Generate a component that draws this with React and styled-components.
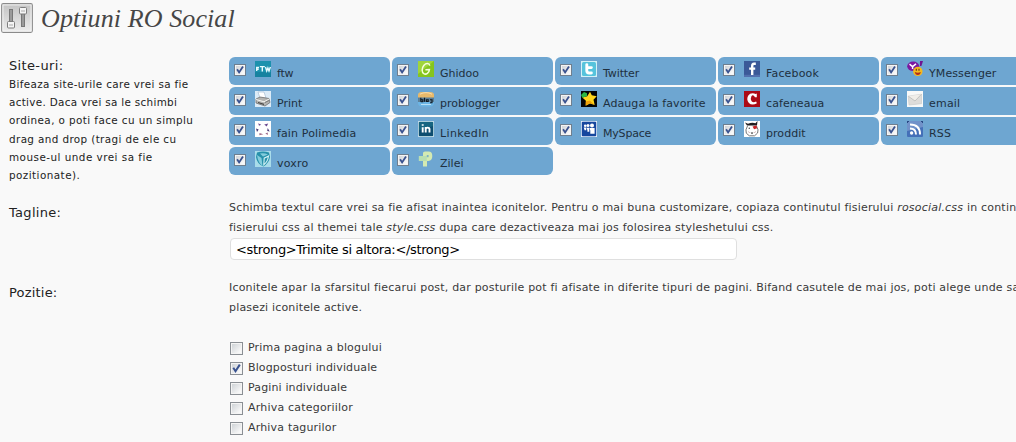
import React from "react";
import styled, { createGlobalStyle } from "styled-components";

const GlobalStyle = createGlobalStyle`
  * { box-sizing: border-box; }
  html, body { margin: 0; height: 442px; overflow: hidden; background: #f9f9f9; }
  body { font-family: Verdana, "DejaVu Sans", sans-serif; color: #3a3a3a; font-size: 11px; }
`;

const Page = styled.main`
  width: 1016px;
  height: 442px;
  overflow: hidden;
  background: #f9f9f9;
`;

const Header = styled.header`
  display: flex;
  height: 57px;
  padding: 3px 0 0 1px;
`;

const Title = styled.h1`
  margin: 1px 0 0 8px;
  font: italic 26px/30px Georgia, "Liberation Serif", serif;
  letter-spacing: 0.1px;
  color: #464646;
  white-space: nowrap;
`;

const FormRow = styled.section`
  display: flex;
  height: ${(p) => p.$height}px;
`;

const LabelCell = styled.div`
  width: 229px;
  flex: none;
  padding: ${(p) => p.$top}px 30px 0 9px;
`;

const Label = styled.h2`
  margin: 0;
  font-size: 13px;
  line-height: 18px;
  font-weight: normal;
  color: #222;
  letter-spacing: ${(p) => p.$spacing || 0}px;
`;

const Hint = styled.p`
  margin: 0;
  font-size: 10.4px;
  line-height: 18.2px;
  color: #222;
  white-space: nowrap;
`;

const HintLine = styled.span`
  display: block;
  letter-spacing: ${(p) => p.$spacing}px;
`;

const Content = styled.div`
  flex: none;
  width: 820px;
  padding-top: ${(p) => p.$top || 0}px;
`;

const SiteGrid = styled.ul`
  display: grid;
  grid-template-columns: repeat(5, 161px);
  grid-auto-rows: 28px;
  gap: 2px;
  margin: 0;
  padding: 0;
  list-style: none;
`;

const SiteCard = styled.li`
  display: flex;
  align-items: flex-start;
  padding: 4px 0 0 5px;
  border-radius: 6px;
  background: #6ea6d1;
`;

const SiteName = styled.span`
  margin: 5px 0 0 6px;
  line-height: 16px;
  color: #203040;
  white-space: nowrap;
  letter-spacing: ${(p) => p.$spacing}px;
`;

const Glyph = styled.svg`
  display: block;
  flex: none;
  width: 16px;
  height: 16px;
  margin-left: 9px;
`;

const Box = styled.span`
  display: block;
  flex: none;
  width: ${(p) => p.$size}px;
  height: ${(p) => p.$size}px;
  margin-top: ${(p) => p.$top}px;
  border: 1px solid ${(p) => p.$border};
  background: linear-gradient(135deg, #c9ced2, #f8f8f8 80%);
  box-shadow: inset 0 0 0 1px #f4f4f4;
  svg { display: block; width: 100%; height: 100%; }
`;

const Line = styled.p`
  margin: 0;
  line-height: 20px;
  height: 20px;
  white-space: nowrap;
  letter-spacing: ${(p) => p.$spacing || 0}px;
`;

const TextInput = styled.input`
  display: block;
  width: 507px;
  height: 22px;
  margin: 0 0 0 1px;
  padding: 0 5px 0 5px;
  border: 1px solid #dfdfdf;
  border-radius: 4px;
  background: #fff;
  color: #000;
  font: 13px Verdana, "DejaVu Sans", sans-serif;
  letter-spacing: ${(p) => p.$spacing}px;
`;

const OptionList = styled.div`
  margin-top: 20px;
`;

const Option = styled.label`
  display: flex;
  gap: 5px;
  height: 20px;
  padding-left: 1px;
  line-height: 20px;
  white-space: nowrap;
  letter-spacing: ${(p) => p.$spacing}px;
`;

function Checkbox({ checked, size = 12, top = 3, border = "#6f7f8f" }) {
  return (
    <Box $size={size} $top={top} $border={border} role="checkbox" aria-checked={!!checked}>
      {checked && (
        <svg viewBox="0 0 11 11">
          <path d="M2.3 4.8 4.5 8.2 8.8 1.6" fill="none" stroke="#39528f" strokeWidth="2" />
        </svg>
      )}
    </Box>
  );
}

const icons = {
  ftw: (
    <>
      <rect width="16" height="16" fill="#1c91ad" />
      <rect y="11" width="16" height="5" fill="#1682a0" />
      <g fill="none" stroke="#e8fbff" strokeWidth="1.4">
        <path d="M1.7 10V6.5H4M1 8.3h2.7M4.8 5.6h5M7.3 5.6V10.5M10.5 6l1.2 4 1.2-3 1.1 3 1.4-4" />
      </g>
    </>
  ),
  print: (
    <>
      <rect width="16" height="16" fill="#dcebf7" />
      <path d="M3 1h6l2 6H5z" fill="#fff" stroke="#a8bdd4" strokeWidth=".7" />
      <path d="M1 8l4-2 9 1.5 1 4-5 3.5L1 12z" fill="#b5b5b2" stroke="#666" strokeWidth=".7" />
      <path d="M1 8.5l8 2.3 5.5-3" fill="none" stroke="#f4f4f0" />
      <path d="M3 11l6 1.7V14L3 12z" fill="#444" />
      <path d="M10 11.5l4-2" stroke="#777" />
    </>
  ),
  fain: (
    <>
      <rect width="16" height="16" fill="#fff" />
      <path d="M3.2 2.2l3 1.6-2.2 1zM9.2 3.6l4-1-1.5 3z" fill="#6a4a90" />
      <path d="M1 7.5l2.7 1L2 11zM12.7 7l2 3.5-2.5-.6z" fill="#4a3a78" />
      <path d="M4.5 12l3.8 1.2-4 1zM10.3 12.4l2.4-.8.2 2.4z" fill="#a06a88" />
    </>
  ),
  voxro: (
    <>
      <rect width="16" height="16" fill="#a9dcea" />
      <path d="M2 1.5Q8-.5 14 1.5L15 6q-1 6-6.5 9.5Q2 13 1 6z" fill="#2791ab" />
      <path d="M2 4l4.5 3 1 8Q3 12 2 4zM5 2.5q4-1 8 1L8 5.5z" fill="#84ccdc" />
      <path d="M13.5 5L9.2 7.2l-.4 6.6q4-3 4.7-8.8z" fill="none" stroke="#d7f3f6" strokeWidth="1.1" />
    </>
  ),
  ghidoo: (
    <>
      <rect width="16" height="16" fill="#85c51e" />
      <path d="M0 0h16L0 13z" fill="#a0d53b" />
      <path d="M11.8 4.6C11.3 2 8 2 6 4.3 3.6 7 3.6 11.2 5.8 12.7c2.4 1.3 5.3-.8 5.6-4.1L7.4 8.8" fill="none" stroke="#f5ffdc" strokeWidth="1.5" />
    </>
  ),
  problogger: (
    <>
      <rect y="1" width="16" height="14.5" rx="4" fill="#6cb5e5" />
      <path d="M0 7V4q0-3 4-3h8q4 0 4 3v3z" fill="#e9b96a" />
      <path d="M2 3.2Q8 0 14 3.2" fill="none" stroke="#f8deb0" />
      <rect y="6.5" width="16" height="4.5" fill="#5b7f98" />
      <path d="M2.8 6.8v4M2.8 8.8h2v2h-2M6.5 6.8v4M8.4 8.8h1.8v1.7H8.4zM12 8.8h2v2.9h-2" fill="none" stroke="#101820" strokeWidth="1.1" />
      <path d="M3 13.5h10" stroke="#b8dff5" />
    </>
  ),
  linkedin: (
    <>
      <rect width="16" height="16" rx="1.2" fill="#e1f1f7" />
      <rect x=".7" y=".7" width="14.6" height="14.6" rx="1" fill="#176580" />
      <path d="M1 9q7-1 14-4v10H1z" fill="#0e4e70" />
      <path d="M4.7 6.2v5.3M4.7 3.2v1.6M7.7 11.5V6M7.7 8q0-1.4 1.9-1.4T11.5 8v3.5" fill="none" stroke="#fff" strokeWidth="1.9" />
    </>
  ),
  zilei: (
    <>
      <path d="M5 15.5V2q0-1.5 2-1.5h3.5q3.8 0 3.8 4.4T10.5 10H9v5.5z" fill="#d4eab2" />
      <path d="M.8 5h8v5h-8z" fill="#b9dfb2" />
      <rect x="8.8" y="4" width="1.8" height="2.2" fill="#7fb3c4" />
    </>
  ),
  twitter: (
    <>
      <rect width="16" height="16" fill="#d4f1f7" />
      <rect x="1" y="1" width="14" height="14" rx="1.5" fill="#56c3dc" />
      <path d="M5.8 3.6v6.2q0 2.2 2.3 2.2H10.4M5.8 6.6H10.4" fill="none" stroke="#fff" strokeWidth="2.9" strokeLinecap="round" />
    </>
  ),
  favorite: (
    <>
      <rect width="16" height="16" fill="#050505" />
      <path d="M9 .8l1.8 3.4 4.9 1-3.2 3.6 1.2 5.2-4.7-1.4-4.3 2.2.2-5L1.3 6.5l4.9-1.2z" fill="#ffd51d" />
      <path d="M4.8 10.5l4-1 4.2 4-4.3-1.4-4 2.5z" fill="#f2a10a" />
      <path d="M0 4l3-3 3 1.2v3L1.2 6.8z" fill="#2cb743" />
    </>
  ),
  myspace: (
    <>
      <rect width="16" height="16" fill="#e4edf8" />
      <rect x=".8" y=".8" width="14.4" height="14.4" rx="1" fill="#17479e" />
      <g fill="#fff">
        <circle cx="4.2" cy="4.8" r="1.3" />
        <circle cx="7" cy="4.6" r="1.5" />
        <circle cx="11" cy="4.4" r="2" />
        <path d="M2.7 6.6h2.5v2.6H3.6zM5.5 6.8h2.8v4H6.4V9zM8.6 7h5v5.8H9.3V9.6z" />
      </g>
    </>
  ),
  facebook: (
    <>
      <rect width="16" height="16" fill="#3b5998" />
      <path d="M0 13.8h16V16H0z" fill="#526fad" />
      <path d="M11.8 2.8H10q-1.8 0-1.8 2.3V14M5.2 7.6h6" fill="none" stroke="#fff" strokeWidth="2.4" />
    </>
  ),
  cafeneaua: (
    <>
      <rect width="16" height="16" fill="#ac0b16" />
      <path d="M12.8 6.3V2.4l-1 .6Q6.7 1 4.1 4.8q-2 4 .8 7.2 3.2 3 8 .2l-.8-1.7Q9.4 12 7.6 10.3 6 8 7.4 5.2 9 2.8 11 6.3z" fill="#fff" />
    </>
  ),
  proddit: (
    <>
      <rect width="16" height="16" fill="#fff" />
      <path d="M1 1.5l3 1.2Q8 1 11.5 2.2L13.5 0 13 4.6H3z" fill="#201d20" />
      <path d="M3.5 5Q1 9 2.3 12.2l3 2.6h5.3l3-2.8Q15 9 12.5 5" fill="none" stroke="#555" strokeWidth=".8" />
      <path d="M8.5 5.5l4-1 .6 2.8-3 1z" fill="#c92428" />
      <circle cx="5.3" cy="7.3" r=".8" fill="#555" />
      <path d="M6.6 11.5h2.8L8 13.2z" fill="#333" />
      <path d="M4 10.5l2 1.3M12 10.5l-2 1.3" stroke="#dcc0c0" />
    </>
  ),
  yahoo: (
    <>
      <ellipse cx="6.2" cy="5.3" rx="6" ry="4.8" fill="#7b18a0" />
      <path d="M13 0h3l-1.6 5h-1.5z" fill="#6f1591" />
      <path d="M2.5 3.2l3 2.4M9 2.8L5.6 5.6V8" fill="none" stroke="#fff" strokeWidth="1.5" />
      <circle cx="10.8" cy="10.4" r="4.7" fill="#f5b91d" />
      <path d="M7.8 11q3 1.5 6 0-.5 3-3 3t-3-3z" fill="#b02d1d" />
      <path d="M9.3 7.7v2M12 7.7v2" stroke="#61321b" strokeWidth="1.1" />
    </>
  ),
  email: (
    <>
      <rect width="16" height="16" fill="#f8f9f8" />
      <path d="M1.3 5.2L14.5 3.2v9.5L2 14z" fill="#deddda" stroke="#c5c8c7" strokeWidth=".6" />
      <path d="M1.3 5.2L8 10l6.5-6.8" fill="#f0eee9" stroke="#b8bab8" strokeWidth=".8" />
    </>
  ),
  rss: (
    <>
      <rect width="16" height="16" rx="1" fill="#4470b8" />
      <path d="M0 0h16v6L0 10z" fill="#7192c9" />
      <path d="M0 0h2v1H1v1H0zM14 0h2v2h-1V1h-1z" fill="#284983" />
      <circle cx="4.6" cy="12" r="1.7" fill="#fff" />
      <path d="M3 7.5q6 0 6 6M3 3.6q10 0 10 9.9" fill="none" stroke="#fff" strokeWidth="2" />
    </>
  ),
};

const sites = [
  ["ftw", "ftw", -0.3],
  ["ghidoo", "Ghidoo", 0],
  ["twitter", "Twitter", -0.1],
  ["facebook", "Facebook", 0.17],
  ["yahoo", "YMessenger", 0.1],
  ["print", "Print", 0],
  ["problogger", "problogger", 0],
  ["favorite", "Adauga la favorite", 0.08],
  ["cafeneaua", "cafeneaua", 0.08],
  ["email", "email", 0.2],
  ["fain", "fain Polimedia", 0.13],
  ["linkedin", "LinkedIn", 0.38],
  ["myspace", "MySpace", -0.2],
  ["proddit", "proddit", 0.05],
  ["rss", "RSS", 0.2],
  ["voxro", "voxro", 0.2],
  ["zilei", "Zilei", 0],
];

const hintLines = [
  ["Bifeaza site-urile care vrei sa fie", 0.36],
  ["active. Daca vrei sa le schimbi", 0.31],
  ["ordinea, o poti face cu un simplu", 0.41],
  ["drag and drop (tragi de ele cu", 0.38],
  ["mouse-ul unde vrei sa fie", 0.48],
  ["pozitionate).", 0.45],
];

const options = [
  ["Prima pagina a blogului", false, 0.17],
  ["Blogposturi individuale", true, 0.13],
  ["Pagini individuale", false, 0.14],
  ["Arhiva categoriilor", false, 0.2],
  ["Arhiva tagurilor", false, 0.18],
];

function SlidersIcon() {
  return (
    <svg width="32" height="30" viewBox="0 0 32 30">
      <defs>
        <linearGradient id="plate" x1="0" y1="0" x2="0" y2="1">
          <stop offset="0" stopColor="#c2c2c2" />
          <stop offset="1" stopColor="#ededed" />
        </linearGradient>
      </defs>
      <rect x=".7" y=".7" width="30.6" height="28.6" rx="1.5" fill="url(#plate)" stroke="#8b8b8b" strokeWidth="1.2" />
      <rect x="1.9" y="1.9" width="28.2" height="26.2" fill="none" stroke="#f4f4f4" />
      <rect x="8.5" y="6.5" width="3" height="17" fill="#9a9a9a" stroke="#777" />
      <rect x="20.5" y="6.5" width="3" height="17" fill="#9a9a9a" stroke="#777" />
      <rect x="6.5" y="18.5" width="7" height="6.5" rx="1" fill="#f5f5f5" stroke="#7d7d7d" />
      <rect x="18.5" y="4.5" width="7" height="6.5" rx="1" fill="#f5f5f5" stroke="#7d7d7d" />
      <path d="M8 22h4M20 8h4" stroke="#aaa" />
    </svg>
  );
}

export default function App() {
  return (
    <Page>
      <GlobalStyle />
      <Header>
        <SlidersIcon />
        <Title>Optiuni RO Social</Title>
      </Header>
      <FormRow $height={140}>
        <LabelCell $top={0}>
          <Label $spacing={0.35}>Site-uri:</Label>
          <Hint>
            {hintLines.map(([text, spacing]) => (
              <HintLine key={text} $spacing={spacing}>{text}</HintLine>
            ))}
          </Hint>
        </LabelCell>
        <Content>
          <SiteGrid>
            {sites.map(([icon, name, spacing]) => (
              <SiteCard key={icon}>
                <Checkbox checked />
                <Glyph viewBox="0 0 16 16">{icons[icon]}</Glyph>
                <SiteName $spacing={spacing}>{name}</SiteName>
              </SiteCard>
            ))}
          </SiteGrid>
        </Content>
      </FormRow>
      <FormRow $height={80}>
        <LabelCell $top={7}>
          <Label $spacing={0.3}>Tagline:</Label>
        </LabelCell>
        <Content $top={1}>
          <Line $spacing={0.2}>
            Schimba textul care vrei sa fie afisat inaintea iconitelor. Pentru o mai buna customizare, copiaza continutul fisierului <em>rosocial.css</em> in continutul
          </Line>
          <Line $spacing={0.2}>
            fisierului css al themei tale <em>style.css</em> dupa care dezactiveaza mai jos folosirea styleshetului css.
          </Line>
          <TextInput defaultValue="<strong>Trimite si altora:</strong>" $spacing={-0.35} />
        </Content>
      </FormRow>
      <FormRow $height={165}>
        <LabelCell $top={7}>
          <Label $spacing={0.2}>Pozitie:</Label>
        </LabelCell>
        <Content $top={1}>
          <Line $spacing={0.19}>
            Iconitele apar la sfarsitul fiecarui post, dar posturile pot fi afisate in diferite tipuri de pagini. Bifand casutele de mai jos, poti alege unde sa
          </Line>
          <Line $spacing={0.17}>plasezi iconitele active.</Line>
          <OptionList>
            {options.map(([text, checked, spacing]) => (
              <Option key={text} $spacing={spacing}>
                <Checkbox checked={checked} size={13} top={4} border="#8a8f94" />
                {text}
              </Option>
            ))}
          </OptionList>
        </Content>
      </FormRow>
    </Page>
  );
}
